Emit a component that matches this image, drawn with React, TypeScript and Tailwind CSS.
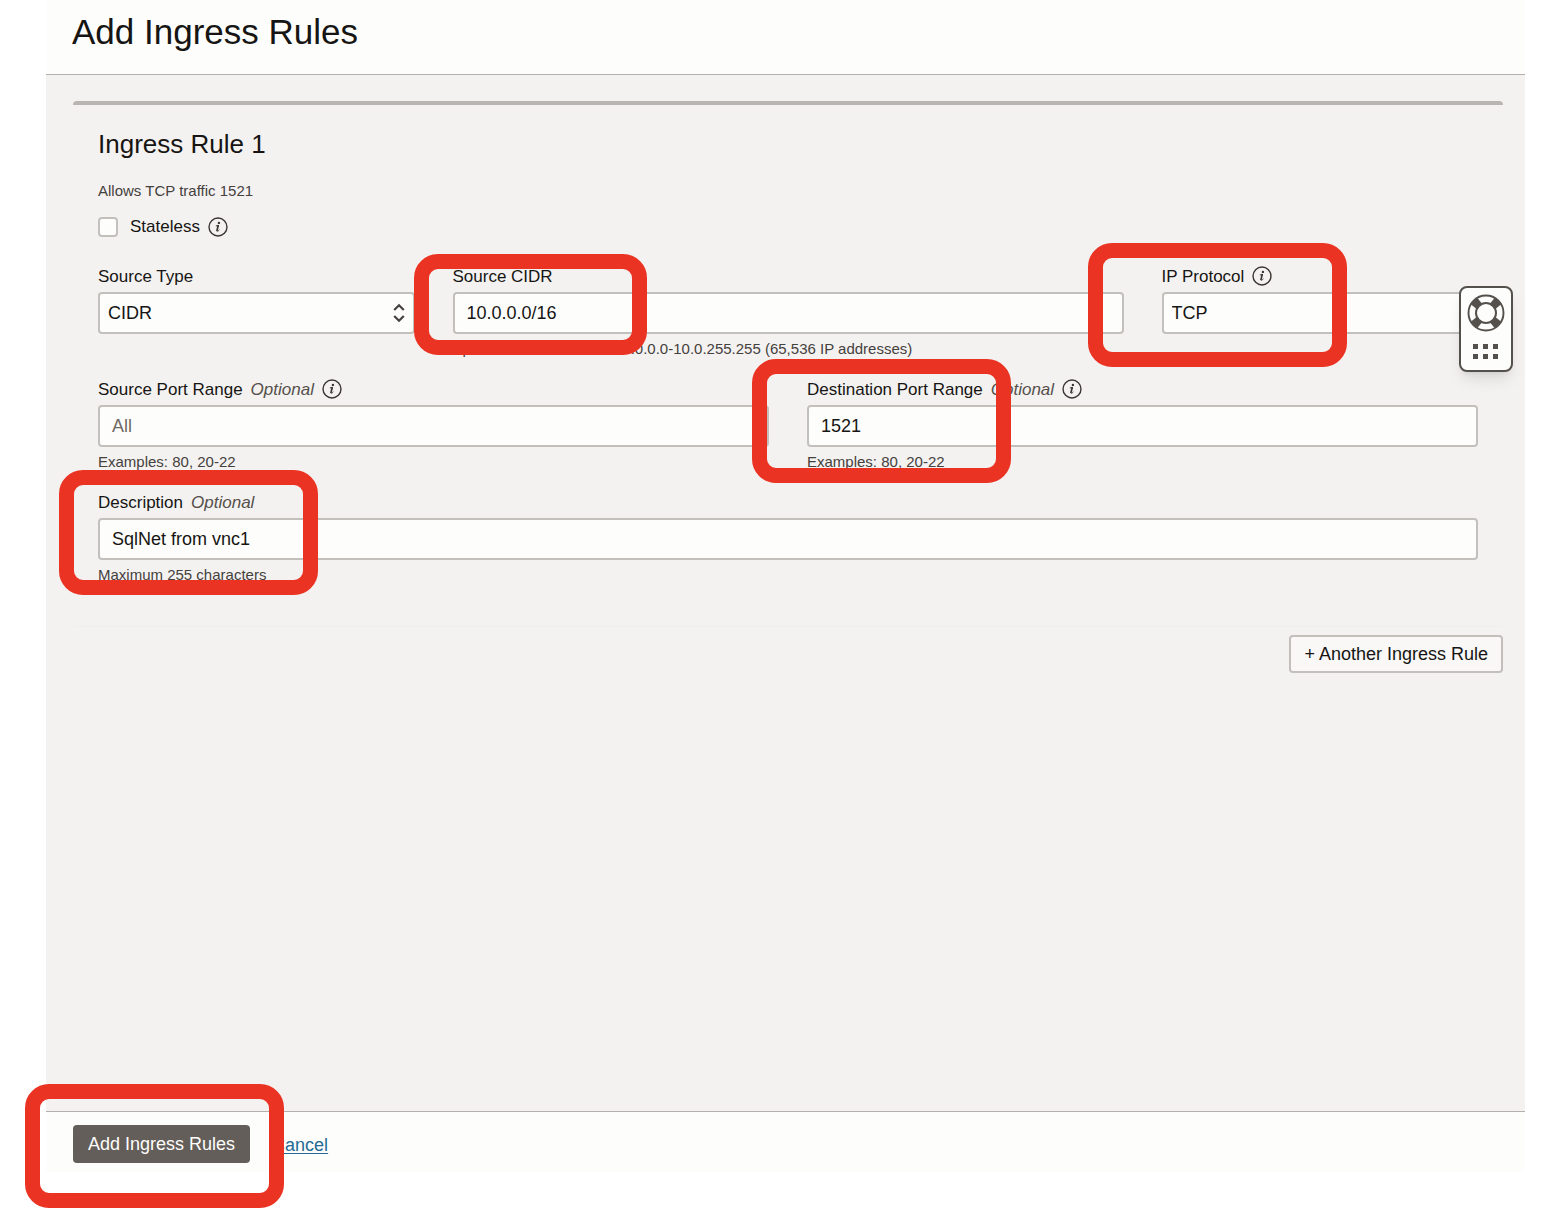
import type { ReactNode } from "react";

function InfoButton({ label }: { label: string }) {
  return (
    <button type="button" aria-label={label} className="ml-2 size-5 shrink-0 text-[#3a3632]">
      <svg viewBox="0 0 20 20" className="size-5" fill="none" stroke="currentColor" strokeLinecap="round" strokeLinejoin="round">
        <circle cx="10" cy="10" r="9" strokeWidth="1.4" />
        <circle cx="10.9" cy="5.9" r="1.2" fill="currentColor" stroke="none" />
        <path d="M8.2 8.9l2.2-.5" strokeWidth="1" />
        <path d="M10.2 8.8l-1.2 4.6" strokeWidth="1.7" />
        <path d="M8.9 13.8c.1 1 1.4.5 2.2-.8" strokeWidth="1" />
      </svg>
    </button>
  );
}

function Highlight({ className }: { className: string }) {
  return (
    <span
      aria-hidden="true"
      className={"pointer-events-none absolute z-10 rounded-3xl border-[15px] border-[#eb3323] " + className}
    />
  );
}

interface FieldProps {
  id: string;
  label: string;
  optional?: boolean;
  info?: boolean;
  hint?: string;
  className?: string;
  highlight?: string;
  children: ReactNode;
}

function Field({ id, label, optional, info, hint, className = "", highlight, children }: FieldProps) {
  return (
    <div className={"relative " + className}>
      <div className="flex h-7 items-center pb-1 text-[17px] leading-6">
        <label htmlFor={id} className="pt-0.5">
          {label}
          {optional && <em className="ml-2 text-[#55504b]">Optional</em>}
        </label>
        {info && <InfoButton label={"About " + label} />}
      </div>
      {children}
      {hint && (
        <p id={id + "-hint"} className="h-[30px] text-[15px] leading-[30px] whitespace-nowrap text-[#45413d]">
          {hint}
        </p>
      )}
      {highlight && <Highlight className={highlight} />}
    </div>
  );
}

const control =
  "block h-[42px] w-full rounded-[4px] border-2 border-[#c3bfbb] bg-[#fdfdfb] text-lg text-[#161513] placeholder:text-[#6f6963]";

function TextInput({ id, value, placeholder }: { id: string; value?: string; placeholder?: string }) {
  return (
    <input
      id={id}
      type="text"
      defaultValue={value}
      placeholder={placeholder}
      aria-describedby={id + "-hint"}
      className={control + " px-3"}
    />
  );
}

function Select({ id, options, arrow = "right-2.5" }: { id: string; options: string[]; arrow?: string }) {
  return (
    <div className="relative">
      <select id={id} className={control + " appearance-none pr-8 pl-2"}>
        {options.map((option) => (
          <option key={option}>{option}</option>
        ))}
      </select>
      <svg
        viewBox="0 0 12 20"
        className={"pointer-events-none absolute top-[11px] h-5 w-3 " + arrow}
        fill="none"
        stroke="#45413d"
        strokeWidth="2.2"
      >
        <path d="M1.2 7L6 2.2 10.8 7M1.2 13L6 17.8l4.8-4.8" />
      </svg>
    </div>
  );
}

function HelpWidget() {
  return (
    <button
      type="button"
      aria-label="Help"
      className="absolute top-[211px] right-3 z-10 flex h-[86px] w-[54px] flex-col items-center rounded-lg border-2 border-[#54504b] bg-[#fdfdfb] pt-1.5 text-[#54504b] shadow-lg"
    >
      <svg viewBox="0 0 38 38" className="size-[38px]" fill="none" stroke="currentColor">
        <path
          d="M3.8 10.2L10.2 3.8L19 14.5L27.8 3.8L34.2 10.2L23.5 19L34.2 27.8L27.8 34.2L19 23.5L10.2 34.2L3.8 27.8L14.5 19z"
          fill="currentColor"
          stroke="none"
        />
        <circle cx="19" cy="19" r="17.5" strokeWidth="1.9" />
        <circle cx="19" cy="19" r="10" strokeWidth="2" fill="#fdfdfb" />
      </svg>
      <svg viewBox="0 0 26 16" className="mt-3 h-4 w-[26px]" fill="currentColor">
        <path d="M0 0h5v5H0zM10 0h5v5h-5zM20 0h5v5h-5zM0 10h5v5H0zM10 10h5v5h-5zM20 10h5v5h-5z" />
      </svg>
    </button>
  );
}

export default function App() {
  return (
    <div className="min-h-screen bg-white font-['Liberation_Sans',Arial,sans-serif]">
      <div className="flex min-h-screen flex-col pr-[27px] pb-[46px] pl-[46px] text-[#161513]">
        <header className="h-[75px] border-b border-[#b5b0ab] bg-[#fdfdfb] pl-[26px]">
          <h1 className="text-[35px] leading-[64px]">Add Ingress Rules</h1>
        </header>

        <main className="relative flex-1 bg-[#f4f2f1] pt-[26px] pr-[22px] pl-[27px]">
          <section className="rounded-[4px] border-t-4 border-b border-t-[#bab5b1] border-b-[#f0eeec] px-[25px] pb-9">
            <h2 className="pt-5 text-[26px] leading-[38px]">Ingress Rule 1</h2>
            <p className="pt-[18px] text-[15px] leading-5 text-[#45413d]">Allows TCP traffic 1521</p>
            <div className="mt-3.5 flex h-6 items-center text-[17px]">
              <input
                id="stateless"
                type="checkbox"
                className="size-5 appearance-none rounded-[4px] border-2 border-[#c3bfbb] bg-[#fdfdfb] checked:bg-[#625d58]"
              />
              <label htmlFor="stateless" className="ml-3">
                Stateless
              </label>
              <InfoButton label="About Stateless" />
            </div>

            <div className="mt-[25px] grid grid-cols-4 gap-x-[38px] gap-y-[13px]">
              <Field id="source-type" label="Source Type">
                <Select id="source-type" options={["CIDR", "Service"]} />
              </Field>
              <Field
                id="source-cidr"
                label="Source CIDR"
                hint="Specified IP addresses: 10.0.0.0-10.0.255.255 (65,536 IP addresses)"
                className="col-span-2"
                highlight="-top-[10px] -left-[39px] h-[101px] w-[233px]"
              >
                <TextInput id="source-cidr" value="10.0.0.0/16" />
              </Field>
              <Field
                id="ip-protocol"
                label="IP Protocol"
                info
                highlight="-top-[21px] -left-[74px] h-[124px] w-[259px]"
              >
                <Select id="ip-protocol" options={["TCP", "UDP", "ICMP"]} arrow="right-1" />
              </Field>
              <Field
                id="source-port"
                label="Source Port Range"
                optional
                info
                hint="Examples: 80, 20-22"
                className="col-span-2"
              >
                <TextInput id="source-port" placeholder="All" />
              </Field>
              <Field
                id="destination-port"
                label="Destination Port Range"
                optional
                info
                hint="Examples: 80, 20-22"
                className="col-span-2"
                highlight="-top-[18px] -left-[55px] h-[124px] w-[259px]"
              >
                <TextInput id="destination-port" value="1521" />
              </Field>
              <Field
                id="description"
                label="Description"
                optional
                hint="Maximum 255 characters"
                className="col-span-4"
                highlight="-top-[20px] -left-[39px] h-[125px] w-[259px]"
              >
                <TextInput id="description" value="SqlNet from vnc1" />
              </Field>
            </div>
          </section>

          <div className="flex justify-end pt-2">
            <button
              type="button"
              className="h-[38px] rounded-[4px] border-2 border-[#c3bfbb] bg-[#f9f8f7] px-[13px] text-lg leading-none"
            >
              + Another Ingress Rule
            </button>
          </div>
          <HelpWidget />
        </main>

        <footer className="flex h-[61px] items-start border-t border-[#b5b0ab] bg-[#fdfdfb] pt-[13px] pl-[27px]">
          <div className="relative">
            <button type="button" className="h-[38px] rounded-[4px] bg-[#645e5a] px-[15px] text-lg leading-none text-[#fdfdfb]">
              Add Ingress Rules
            </button>
            <Highlight className="-top-[41px] -left-[48px] h-[124px] w-[259px]" />
          </div>
          <a href="#cancel" className="ml-[22px] text-lg leading-10 text-[#246a94] underline underline-offset-2">
            Cancel
          </a>
        </footer>
      </div>
    </div>
  );
}
